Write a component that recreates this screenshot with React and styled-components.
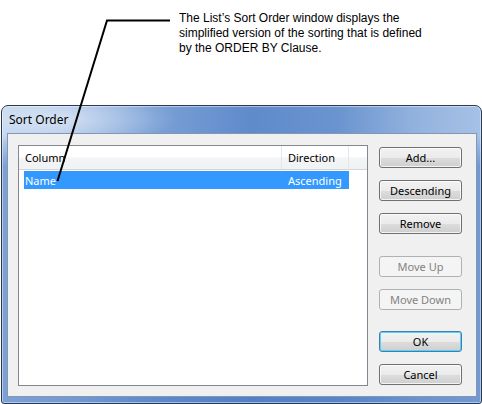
import React from "react";
import styled, { createGlobalStyle } from "styled-components";

const GlobalStyle = createGlobalStyle`
  html, body {
    margin: 0;
    padding: 0;
    background: #ffffff;
  }
`;

const buttons = [
  { label: "Add...", gap: 0 },
  { label: "Descending", gap: 12 },
  { label: "Remove", gap: 12 },
  { label: "Move Up", gap: 22, disabled: true },
  { label: "Move Down", gap: 12, disabled: true },
  { label: "OK", gap: 21, isDefault: true },
  { label: "Cancel", gap: 12 },
];

export default function App() {
  return (
    <Page>
      <GlobalStyle />
      <Callout>
        The List’s Sort Order window displays the
        <br />
        simplified version of the sorting that is defined
        <br />
        by the ORDER BY Clause.
      </Callout>
      <Window>
        <TitleBar>Sort Order</TitleBar>
        <Frame>
          <Client>
            <ListBox>
              <HeaderRow>
                <HeaderCell>Column</HeaderCell>
                <HeaderCell>Direction</HeaderCell>
                <HeaderCell />
              </HeaderRow>
              <Row selected>
                <Cell first>Name</Cell>
                <Cell>Ascending</Cell>
              </Row>
            </ListBox>
            <ButtonColumn>
              {buttons.map((b) => (
                <DlgButton
                  key={b.label}
                  $gap={b.gap}
                  $default={b.isDefault}
                  disabled={b.disabled}
                >
                  {b.label}
                </DlgButton>
              ))}
            </ButtonColumn>
          </Client>
        </Frame>
      </Window>
      <Leader width="482" height="404">
        <polyline
          points="170,20.5 107,20.5 57.5,181"
          fill="none"
          stroke="#000"
          strokeWidth="2"
        />
      </Leader>
    </Page>
  );
}

const Page = styled.div`
  position: relative;
  width: 482px;
  height: 404px;
  overflow: hidden;
  background: #fff;
`;

const Callout = styled.div`
  box-sizing: border-box;
  height: 105px;
  padding: 11px 0 0 179px;
  font-family: "Liberation Sans", Arial, sans-serif;
  font-size: 12px;
  line-height: 15px;
  color: #000;
`;

const Leader = styled.svg`
  position: absolute;
  left: 0;
  top: 0;
  pointer-events: none;
`;

const Window = styled.div`
  box-sizing: border-box;
  margin-left: 1px;
  width: 481px;
  height: 299px;
  display: flex;
  flex-direction: column;
  border: 1px solid #2b3a4f;
  border-radius: 7px 7px 3px 3px;
  background:
    radial-gradient(ellipse 120px 28px at 55px 13px, rgba(255, 255, 255, 0.5), rgba(255, 255, 255, 0)),
    linear-gradient(to bottom, rgba(0, 0, 0, 0) 0px, rgba(0, 0, 0, 0) 30px, rgba(70, 120, 195, 0.55) 60px),
    linear-gradient(
      to right,
      #bcd2ed 0%,
      #a8c2e6 14%,
      #7aa0d6 32%,
      #5f8bcb 52%,
      #6a94cf 70%,
      #92b2de 86%,
      #a6c1e6 100%
    );
  box-shadow: inset 0 0 0 1px rgba(255, 255, 255, 0.45);
  font-family: "Noto Sans", "DejaVu Sans", sans-serif;
`;

const TitleBar = styled.div`
  height: 27px;
  display: flex;
  align-items: center;
  padding-left: 7px;
  font-size: 12px;
  color: #000;
`;

const Frame = styled.div`
  flex: 1;
  display: flex;
  padding: 0 4px 6px 5px;
`;

const Client = styled.div`
  flex: 1;
  display: flex;
  align-items: flex-start;
  gap: 11px;
  padding: 11px 13px 10px 10px;
  background: #f0f0f0;
  border: 1px solid #8396b3;
`;

const ListBox = styled.div`
  box-sizing: border-box;
  width: 350px;
  height: 241px;
  background: #fff;
  border: 1px solid #828790;
`;

const HeaderRow = styled.div`
  display: grid;
  grid-template-columns: 263px 67px 1fr;
  height: 23px;
  border-bottom: 1px solid #d5d5d5;
  background: linear-gradient(to bottom, #ffffff 0%, #ffffff 45%, #f3f4f6 55%, #f1f2f4 100%);
`;

const HeaderCell = styled.div`
  display: flex;
  align-items: center;
  padding-left: 6px;
  font-size: 11px;
  color: #000;
  border-right: 1px solid #e3e6ea;
  &:last-child {
    border-right: none;
  }
`;

const Row = styled.div`
  display: grid;
  grid-template-columns: 258px 67px;
  height: 18px;
  margin: 1px 0 0 5px;
  width: 325px;
  background: ${(p) => (p.selected ? "#3399ff" : "transparent")};
  color: ${(p) => (p.selected ? "#fff" : "#000")};
`;

const Cell = styled.div`
  display: flex;
  align-items: center;
  padding-left: ${(p) => (p.first ? "1px" : "6px")};
  font-size: 11px;
  white-space: nowrap;
`;

const ButtonColumn = styled.div`
  display: flex;
  flex-direction: column;
  width: 83px;
  padding-top: 2px;
`;

const DlgButton = styled.button`
  box-sizing: border-box;
  width: 83px;
  height: 21px;
  margin: ${(p) => p.$gap}px 0 0 0;
  padding: 0;
  font-family: "Noto Sans", "DejaVu Sans", sans-serif;
  font-size: 11px;
  color: #000;
  border: 1px solid ${(p) => (p.$default ? "#3c7fb1" : "#707070")};
  border-radius: 3px;
  background: linear-gradient(to bottom, #f2f2f2 0%, #ebebeb 50%, #dddddd 51%, #cfcfcf 100%);
  box-shadow: ${(p) =>
    p.$default
      ? "inset 0 0 0 1px #59d1f5"
      : "inset 0 0 0 1px rgba(255, 255, 255, 0.75)"};
  &:disabled {
    color: #838383;
    border-color: #adb2b5;
    background: #f4f4f4;
    box-shadow: none;
  }
`;
